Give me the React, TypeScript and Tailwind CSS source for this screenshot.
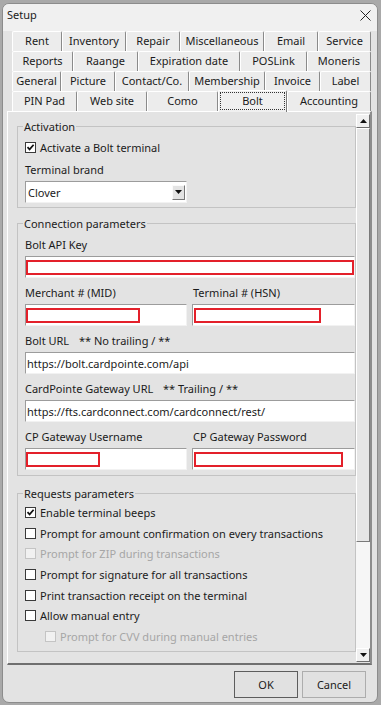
import React from 'react';

const tabRows: { label: string; w: string }[][] = [
  [
    { label: 'Rent', w: 'w-[50px]' },
    { label: 'Inventory', w: 'w-[64px]' },
    { label: 'Repair', w: 'w-[54px]' },
    { label: 'Miscellaneous', w: 'w-[84px]' },
    { label: 'Email', w: 'w-[54px]' },
    { label: 'Service', w: 'w-[53px]' },
  ],
  [
    { label: 'Reports', w: 'w-[61px]' },
    { label: 'Raange', w: 'w-[65px]' },
    { label: 'Expiration date', w: 'w-[102px]' },
    { label: 'POSLink', w: 'w-[67px]' },
    { label: 'Moneris', w: 'w-[64px]' },
  ],
  [
    { label: 'General', w: 'w-[49px]' },
    { label: 'Picture', w: 'w-[54px]' },
    { label: 'Contact/Co.', w: 'w-[74px]' },
    { label: 'Membership', w: 'w-[76px]' },
    { label: 'Invoice', w: 'w-[55px]' },
    { label: 'Label', w: 'w-[51px]' },
  ],
  [
    { label: 'PIN Pad', w: 'w-[65px]' },
    { label: 'Web site', w: 'w-[70px]' },
    { label: 'Como', w: 'w-[71px]' },
    { label: 'Bolt', w: 'w-[69px]' },
    { label: 'Accounting', w: 'w-[84px]' },
  ],
];

const requestOptions = [
  { label: 'Enable terminal beeps', checked: true },
  { label: 'Prompt for amount confirmation on every transactions' },
  { label: 'Prompt for ZIP during transactions', disabled: true },
  { label: 'Prompt for signature for all transactions' },
  { label: 'Print transaction receipt on the terminal' },
  { label: 'Allow manual entry' },
  { label: 'Prompt for CVV during manual entries', disabled: true, indent: true },
];

const CheckBox = ({ checked, disabled }: { checked?: boolean; disabled?: boolean }) => (
  <span
    className={
      disabled
        ? 'w-[11px] h-[11px] border border-[#c4c4c4] bg-[#f1f1f1] flex items-center justify-center shrink-0'
        : 'w-[11px] h-[11px] border border-[#3a3a3a] bg-white flex items-center justify-center shrink-0'
    }
  >
    {checked && (
      <svg width="9" height="9" viewBox="0 0 9 9">
        <path d="M1.5 4.2 L3.6 6.4 L7.6 1.8" fill="none" stroke="#111" strokeWidth="1.7" />
      </svg>
    )}
  </span>
);

const Arrow = ({ down }: { down?: boolean }) => (
  <svg width="7" height="4" viewBox="0 0 7 4">
    <path d={down ? 'M0 0 H7 L3.5 4 Z' : 'M0 4 H7 L3.5 0 Z'} fill="#111" />
  </svg>
);

const Field = ({ children, className }: { children?: React.ReactNode; className: string }) => (
  <div
    className={`h-[22px] bg-white border border-t-[#9c9c9c] border-l-[#9c9c9c] border-b-[#f2f2f2] border-r-[#f2f2f2] ${className}`}
  >
    {children}
  </div>
);

const RedBox = ({ w }: { w: string }) => (
  <div className={`mt-[3px] h-[15px] border-2 border-[#e3202a] ${w}`} />
);

const Group = ({ title, className, children }: { title: string; className: string; children?: React.ReactNode }) => (
  <fieldset className={`ml-[9px] border border-[#c3c3c3] pl-[7px] ${className}`}>
    <legend className="-ml-[2px] px-[1px] h-[15px] leading-[15px]">{title}</legend>
    {children}
  </fieldset>
);

export default function App() {
  return (
    <div className="w-[381px] h-[705px] bg-[#a9a9a9] pt-[3px] pl-[2px] font-['Noto_Sans',sans-serif] text-[11px] leading-[15px] text-[#1b1b1b] overflow-hidden">
      <div className="w-[376px] h-[700px] bg-[#e3e3e3] border border-[#8c8c8c] rounded-[7px] overflow-hidden flex flex-col">
        {/* Title bar */}
        <div className="h-[27px] bg-[#f0f0f0] flex items-start justify-between pt-[3px] pl-[4px] pr-[6px] shrink-0">
          <span>Setup</span>
          <svg width="11" height="11" viewBox="0 0 11 11" className="mt-[3px]">
            <path d="M0.5 0.5 L10.5 10.5 M10.5 0.5 L0.5 10.5" stroke="#222" strokeWidth="1" />
          </svg>
        </div>

        {/* Tabs */}
        <div className="flex flex-col shrink-0">
          {tabRows.map((row, ri) => (
            <div key={ri} className="flex h-[20px] ml-[9px] items-end">
              {row.map((t) =>
                t.label === 'Bolt' ? (
                  <div
                    key={t.label}
                    className={`${t.w} h-[22px] -mb-[1px] relative z-10 bg-[#f0f0f0] border-l border-t border-r border-l-white border-t-white border-r-[#7a7a7a] rounded-t-[2px] flex items-start justify-center pt-[1px]`}
                  >
                    <span className="border border-dotted border-[#333] w-[65px] h-[18px] flex items-start justify-center">
                      Bolt
                    </span>
                  </div>
                ) : (
                  <div
                    key={t.label}
                    className={`${t.w} h-[20px] bg-[#ececec] border-l border-t border-r border-l-white border-t-white border-r-[#8a8a8a] rounded-t-[2px] flex items-center justify-center pb-[2px]`}
                  >
                    {t.label}
                  </div>
                )
              )}
            </div>
          ))}
        </div>

        {/* Tab panel */}
        <div className="ml-[4px] w-[365px] h-[554px] border-l border-t border-l-white border-t-white border-r-2 border-b-2 border-r-[#8d8d8d] border-b-[#6f6f6f] flex shrink-0">
          <div className="flex-1 overflow-hidden">
            <div className="w-[348px] pt-[7px]">
              <Group title="Activation" className="pb-[4px]">
                <div className="mt-[3px] h-[20px] flex items-center gap-[4px]">
                  <CheckBox checked />
                  <span>Activate a Bolt terminal</span>
                </div>
                <div className="mt-[2px] h-[20px] flex items-center">Terminal brand</div>
                <div className="mt-[2px] w-[162px] h-[22px] bg-white border border-t-[#9c9c9c] border-l-[#9c9c9c] border-b-[#f2f2f2] border-r-[#f2f2f2] flex items-center justify-between pl-[2px] pr-[1px]">
                  <span>Clover</span>
                  <span className="w-[13px] h-[15px] bg-[#e3e3e3] border border-t-[#fafafa] border-l-[#fafafa] border-b-[#777] border-r-[#777] flex items-center justify-center">
                    <Arrow down />
                  </span>
                </div>
              </Group>

              <Group title="Connection parameters" className="mt-[8px] pb-[5px]">
                <div className="mt-[3px] h-[20px] flex items-center">Bolt API Key</div>
                <Field className="mt-[2px] w-[330px]">
                  <RedBox w="w-[328px]" />
                </Field>

                <div className="mt-[4px] h-[20px] flex items-center">
                  <span className="w-[168px]">Merchant # (MID)</span>
                  <span>Terminal # (HSN)</span>
                </div>
                <div className="mt-[2px] flex gap-[5px]">
                  <Field className="w-[162px]">
                    <RedBox w="w-[114px]" />
                  </Field>
                  <Field className="w-[163px] pl-[1px]">
                    <RedBox w="w-[127px]" />
                  </Field>
                </div>

                <div className="mt-[4px] h-[20px] flex items-center">
                  <span className="w-[54px]">Bolt URL</span>
                  <span>** No trailing / **</span>
                </div>
                <Field className="mt-[2px] w-[330px] flex items-center pl-[1px]">
                  https://bolt.cardpointe.com/api
                </Field>

                <div className="mt-[4px] h-[20px] flex items-center">
                  <span className="w-[138px]">CardPointe Gateway URL</span>
                  <span>** Trailing / **</span>
                </div>
                <Field className="mt-[2px] w-[330px] flex items-center pl-[1px]">
                  https://fts.cardconnect.com/cardconnect/rest/
                </Field>

                <div className="mt-[4px] h-[20px] flex items-center">
                  <span className="w-[168px]">CP Gateway Username</span>
                  <span>CP Gateway Password</span>
                </div>
                <div className="mt-[2px] flex gap-[5px]">
                  <Field className="w-[162px]">
                    <RedBox w="w-[74px]" />
                  </Field>
                  <Field className="w-[163px] pl-[1px]">
                    <RedBox w="w-[149px]" />
                  </Field>
                </div>
              </Group>

              <Group title="Requests parameters" className="mt-[10px] pb-[4px]">
                <div className="mt-[1px] flex flex-col">
                  {requestOptions.map((o) => (
                    <div
                      key={o.label}
                      className={`h-[20.7px] flex items-center gap-[4px] ${o.indent ? 'pl-[20px]' : ''} ${
                        o.disabled ? 'text-[#a6a6a6]' : ''
                      }`}
                    >
                      <CheckBox checked={o.checked} disabled={o.disabled} />
                      <span>{o.label}</span>
                    </div>
                  ))}
                </div>
              </Group>

              <Group title="Tip" className="mt-[9px] h-[40px]" />
            </div>
          </div>

          {/* Scrollbar */}
          <div className="w-[14px] mt-[2px] mb-[1px] flex flex-col shrink-0">
            <div className="h-[14px] bg-[#f0f0f0] border border-t-white border-l-white border-b-[#6f6f6f] border-r-[#6f6f6f] flex items-center justify-center">
              <Arrow />
            </div>
            <div className="h-[414px] bg-[#e6e6e6] border border-t-white border-l-white border-b-[#7a7a7a] border-r-[#7a7a7a]" />
            <div className="flex-1 bg-[#f6f6f6]" />
            <div className="h-[14px] bg-[#f0f0f0] border border-t-white border-l-white border-b-[#6f6f6f] border-r-[#6f6f6f] flex items-center justify-center">
              <Arrow down />
            </div>
          </div>
        </div>

        {/* Buttons */}
        <div className="mt-[6px] flex justify-end gap-[4px] mr-[11px]">
          <button className="w-[64px] h-[27px] bg-[#e1e1e1] border border-[#5d5d5d] flex items-center justify-center pb-[1px]">
            OK
          </button>
          <button className="w-[64px] h-[27px] bg-[#e1e1e1] border border-[#adadad] flex items-center justify-center pb-[1px]">
            Cancel
          </button>
        </div>
      </div>
    </div>
  );
}
